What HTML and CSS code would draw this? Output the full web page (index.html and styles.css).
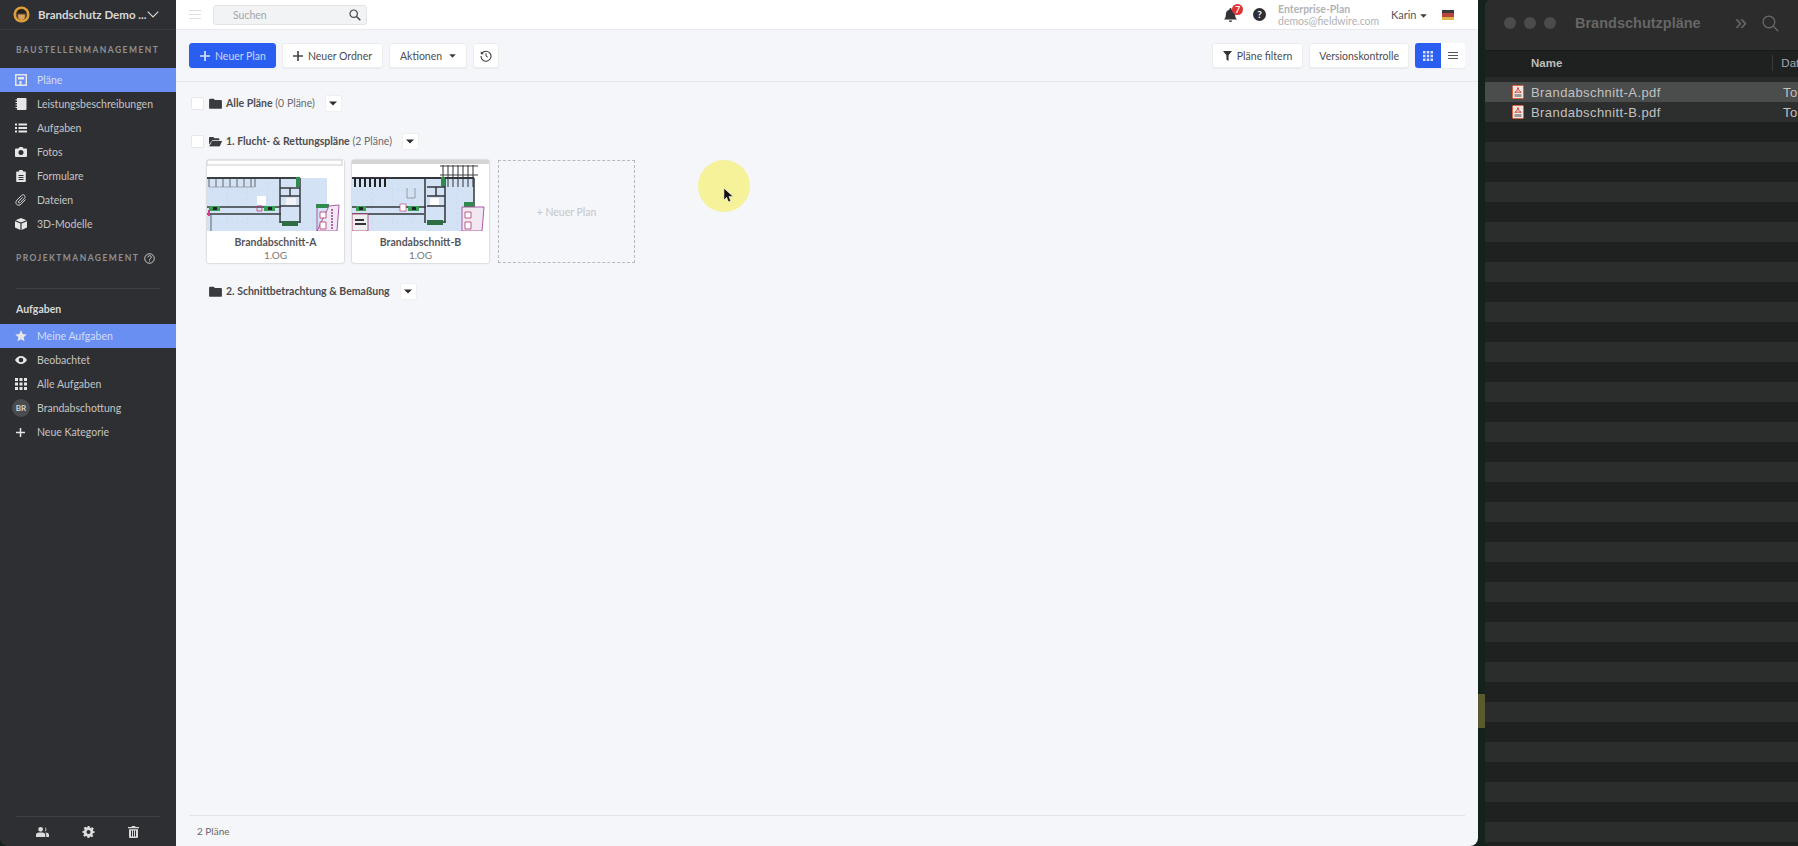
FILE: index.html
```html
<!DOCTYPE html>
<html lang="de">
<head>
    <meta charset="UTF-8">
    <meta name="viewport" content="width=device-width, initial-scale=1.0">
    <title>Pläne</title>
    <link rel="stylesheet" href="styles.css">
</head>
<body>
    <svg class="icon-defs" aria-hidden="true">
        <symbol id="i-folder" viewBox="0 0 14 12"><path d="M0 2a1.3 1.3 0 0 1 1.3-1.3h3.6L6.4 2.2h6.3A1.3 1.3 0 0 1 14 3.5v7a1.3 1.3 0 0 1-1.3 1.3H1.3A1.3 1.3 0 0 1 0 10.5z"/></symbol>
        <symbol id="i-folder-open" viewBox="0 0 15 12"><path d="M0 2a1.3 1.3 0 0 1 1.3-1.3h3.6l1.5 1.5h4.3a1.3 1.3 0 0 1 1.3 1.3v1H4L0 9.5z"/><path d="M3.6 5.3H14.5c.4 0 .6.4.4.7l-2.3 5.2a1 1 0 0 1-.9.6H.8c-.4 0-.6-.4-.4-.7z"/></symbol>
        <symbol id="i-caret" viewBox="0 0 10 6"><path d="M0 .5h10L5 5.500z"/></symbol>
        <symbol id="i-plus" viewBox="0 0 12 12"><path d="M5 0h2v5h5v2H7v5H5V7H0V5h5z"/></symbol>
        <symbol id="i-grid" viewBox="0 0 12 12"><path d="M0 0h3v3H0zM4.5 0h3v3h-3zM9 0h3v3H9zM0 4.5h3v3H0zM4.5 4.5h3v3h-3zM9 4.5h3v3H9zM0 9h3v3H0zM4.5 9h3v3h-3zM9 9h3v3H9z"/></symbol>
        <symbol id="i-pdf" viewBox="0 0 12 14"><rect x=".5" y=".5" width="11" height="13" rx="1" fill="#f2e6df" stroke="#d9633f"/><path d="M6 2.5c-.3 2-1.5 4-3.2 4.8 2-.4 4.500-.4 6.400 0C7.500 6.500 6.300 4.500 6 2.500z" fill="none" stroke="#c9302c" stroke-width=".9"/><rect x="2.5" y="9" width="7" height="3" fill="#9a9a9a"/></symbol>
    </svg>

    <div class="app">
        <aside class="sidebar">
            <div class="project">
                <svg class="project-logo" viewBox="0 0 18 18">
                    <circle cx="9" cy="9" r="8.5" fill="#e0a13a"/>
                    <circle cx="9" cy="9" r="6" fill="#5b4a33"/>
                    <path d="M4 8a5 4.5 0 0 1 10 0z" fill="#25231f"/>
                    <path d="M5.5 9h7v2.500a3.500 3.500 0 0 1-7 0z" fill="#d8a05c"/>
                </svg>
                <span class="project-name">Brandschutz Demo ...</span>
                <svg class="project-chevron" viewBox="0 0 12 7"><path d="M.7.7 6 6l5.300-5.300" fill="none" stroke="#d8d8d8" stroke-width="1.200"/></svg>
            </div>

            <div class="side-label">BAUSTELLENMANAGEMENT</div>
            <ul class="side-nav">
                <li class="side-item active">
                    <svg class="side-icon" viewBox="0 0 12 12"><path d="M0 0h12v12H0zM1.5 1.5v9h3V7h2v3.5h4V1.5zM3 3h6v2.5H3z" fill-rule="evenodd"/></svg>
                    Pläne
                </li>
                <li class="side-item">
                    <svg class="side-icon" viewBox="0 0 12 12"><path d="M2 0h8.500A1 1 0 0 1 11.500 1v10a1 1 0 0 1-1 1H2zM.5 1.500h2.500v1H.5zM.5 4h2.500v1H.5zM.5 6.500h2.500v1H.5zM.5 9h2.500v1H.5z"/></svg>
                    Leistungsbeschreibungen
                </li>
                <li class="side-item">
                    <svg class="side-icon" viewBox="0 0 12 12"><path d="M0 1.500h2v2H0zM3.500 1.500H12v2H3.500zM0 5h2v2H0zM3.500 5H12v2H3.500zM0 8.500h2v2H0zM3.500 8.500H12v2H3.500z"/></svg>
                    Aufgaben
                </li>
                <li class="side-item">
                    <svg class="side-icon" viewBox="0 0 12 12"><path d="M1 2.500h2.500L4.500 1h3l1 1.500H11a1 1 0 0 1 1 1V10a1 1 0 0 1-1 1H1a1 1 0 0 1-1-1V3.500a1 1 0 0 1 1-1zM6 4a2.500 2.500 0 1 0 0 5 2.500 2.500 0 0 0 0-5z" fill-rule="evenodd"/></svg>
                    Fotos
                </li>
                <li class="side-item">
                    <svg class="side-icon" viewBox="0 0 12 12"><path d="M2 1.500h2V1a1 1 0 0 1 1-1h2a1 1 0 0 1 1 1v.5h2a.8.8 0 0 1 .8.8v9a.8.8 0 0 1-.8.7H2a.8.8 0 0 1-.8-.7v-9a.8.8 0 0 1 .8-.8zM3.500 5v1h5V5zM3.500 7v1h5V7zM3.500 9v1h5V9z" fill-rule="evenodd"/></svg>
                    Formulare
                </li>
                <li class="side-item">
                    <svg class="side-icon" viewBox="0 0 12 12"><path d="M10.500 5.500 6 10.200c-1.300 1.300-3.200 1.300-4.300.2s-1.100-3 .2-4.300L6.500 1.500c.9-.9 2.200-.9 3-.1s.8 2.100-.1 3L5.200 8.600c-.5.500-1.200.5-1.600.1s-.4-1.100.1-1.600L7.600 3.300" fill="none" stroke="#d8d8d8" stroke-width="1"/></svg>
                    Dateien
                </li>
                <li class="side-item">
                    <svg class="side-icon" viewBox="0 0 12 12"><path d="M6 0l5.500 2.200L6 4.600.5 2.200zM0 3.200l5.400 2.400V12L0 9.500zM12 3.200 6.600 5.600V12L12 9.500z"/></svg>
                    3D-Modelle
                </li>
            </ul>

            <div class="side-label side-label-second">PROJEKTMANAGEMENT
                <svg class="side-help" viewBox="0 0 12 12"><circle cx="6" cy="6" r="5.200" fill="none" stroke="#d8d8d8" stroke-width="1"/><path d="M4.300 4.700a1.800 1.800 0 1 1 2.600 1.600c-.6.300-.9.600-.9 1.200" fill="none" stroke="#d8d8d8" stroke-width="1"/><path d="M5.500 8.300h1v1h-1z" fill="#d8d8d8"/></svg>
            </div>
            <div class="side-rule"></div>

            <div class="side-title">Aufgaben</div>
            <ul class="side-nav">
                <li class="side-item active">
                    <svg class="side-icon" viewBox="0 0 12 12"><path d="M6 .3l1.700 3.700 4 .5-3 2.700.8 4L6 9.200 2.500 11.200l.8-4-3-2.700 4-.5z"/></svg>
                    Meine Aufgaben
                </li>
                <li class="side-item">
                    <svg class="side-icon" viewBox="0 0 12 12"><path d="M6 2c2.700 0 4.800 1.700 6 4-1.200 2.300-3.300 4-6 4S1.200 8.300 0 6c1.200-2.300 3.300-4 6-4zm0 1.700a2.300 2.300 0 1 0 0 4.600 2.300 2.300 0 0 0 0-4.600z" fill-rule="evenodd"/></svg>
                    Beobachtet
                </li>
                <li class="side-item">
                    <svg class="side-icon" viewBox="0 0 12 12"><use href="#i-grid"/></svg>
                    Alle Aufgaben
                </li>
                <li class="side-item side-item-badge">
                    <span class="side-avatar">BR</span>
                    Brandabschottung
                </li>
                <li class="side-item">
                    <svg class="side-icon side-icon-small" viewBox="0 0 12 12"><path d="M5 0h2v5h5v2H7v5H5V7H0V5h5z"/></svg>
                    Neue Kategorie
                </li>
            </ul>

            <div class="side-foot">
                <svg class="foot-icon" viewBox="0 0 14 11"><path d="M5 0a2.600 2.600 0 1 1 0 5.200A2.600 2.600 0 0 1 5 0zM0 11V8.500C0 7 1.500 6 3 6h4c1.500 0 3 1 3 2.500V11z"/><path d="M9.500.5a2.400 2.400 0 0 1 0 4.600 3.500 3.500 0 0 0 0-4.600zM10 6c2 0 4 .8 4 2.500V11h-3V8.500c0-1-.4-1.800-1-2.500z"/></svg>
                <svg class="foot-icon" viewBox="0 0 12 12"><path d="M5 0h2l.3 1.600 1.200.5L9.900 1.200l1.400 1.400-.9 1.400.5 1.200L12 5v2l-1.600.3-.5 1.200.9 1.400-1.400 1.400-1.400-.9-1.200.5L7 12H5l-.3-1.600-1.200-.5-1.400.9L.7 9.400l.9-1.400-.5-1.200L0 7V5l1.600-.3.5-1.200-.9-1.400L2.600.7l1.400.9 1.200-.5zM6 4a2 2 0 1 0 0 4 2 2 0 0 0 0-4z" fill-rule="evenodd"/></svg>
                <svg class="foot-icon" viewBox="0 0 11 12"><path d="M4 0h3l.6 1H11v1.300H0V1h3.400zM1 3.200h9V11a1 1 0 0 1-1 1H2a1 1 0 0 1-1-1zM3 4.500V10.500h1V4.500zM5 4.500V10.500h1V4.500zM7 4.500V10.500h1V4.500z" fill-rule="evenodd"/></svg>
            </div>
        </aside>

        <main class="main">
            <header class="topbar">
                <div class="burger"><span></span><span></span><span></span></div>
                <div class="search">
                    <span>Suchen</span>
                    <svg class="search-icon" viewBox="0 0 12 12"><circle cx="4.700" cy="4.700" r="3.700" fill="none" stroke="#444" stroke-width="1.200"/><path d="M7.500 7.500 11.300 11.300" stroke="#444" stroke-width="1.500"/></svg>
                </div>
                <div class="topbar-right">
                    <div class="bell">
                        <svg class="bell-icon" viewBox="0 0 12 13"><path d="M6 0a1 1 0 0 1 1 1v.6c2 .4 3.300 2 3.300 4 0 3 .6 3.800 1.700 5H0c1.100-1.200 1.700-2 1.700-5 0-2 1.300-3.600 3.300-4V1a1 1 0 0 1 1-1zM4.500 11.500h3a1.500 1.500 0 0 1-3 0z"/></svg>
                        <span class="badge">7</span>
                    </div>
                    <span class="help">?</span>
                    <div class="plan-info">
                        <div class="plan-name">Enterprise-Plan</div>
                        <div>demos@fieldwire.com</div>
                    </div>
                    <span class="user">Karin <svg class="caret-small" viewBox="0 0 10 6"><use href="#i-caret"/></svg></span>
                    <div class="flag"></div>
                </div>
            </header>

            <div class="actions">
                <button class="btn btn-primary"><svg class="btn-plus" viewBox="0 0 12 12"><use href="#i-plus"/></svg>Neuer Plan</button>
                <button class="btn"><svg class="btn-plus" viewBox="0 0 12 12"><use href="#i-plus"/></svg>Neuer Ordner</button>
                <button class="btn">Aktionen <svg class="caret-small caret-btn" viewBox="0 0 10 6"><use href="#i-caret"/></svg></button>
                <button class="btn btn-square">
                    <svg class="btn-history" viewBox="0 0 12 12"><path d="M2 3.200A5 5 0 1 1 1 6" fill="none" stroke="#3c3d40" stroke-width="1.100"/><path d="M.8 1.200v3h3z" fill="#3c3d40"/><path d="M6 3.300V6l1.800 1.200" fill="none" stroke="#3c3d40" stroke-width="1"/></svg>
                </button>
                <div class="actions-right">
                    <button class="btn">
                        <svg class="btn-filter" viewBox="0 0 10 11"><path d="M0 0h10L6.200 4.800V11L3.800 9.300V4.800z"/></svg>Pläne filtern
                    </button>
                    <button class="btn btn-version">Versionskontrolle</button>
                    <div class="toggle">
                        <span class="toggle-on"><svg class="toggle-grid" viewBox="0 0 12 12"><use href="#i-grid"/></svg></span>
                        <span class="toggle-off"><i></i><i></i><i></i></span>
                    </div>
                </div>
            </div>

            <section class="content">
                <div class="folder-row">
                    <span class="check"></span>
                    <svg class="folder-icon" viewBox="0 0 14 12"><use href="#i-folder"/></svg>
                    <span class="folder-name"><b>Alle Pläne</b> (0 Pläne)</span>
                    <span class="drop"><svg viewBox="0 0 10 6"><use href="#i-caret"/></svg></span>
                </div>

                <div class="folder-row folder-row-next">
                    <span class="check"></span>
                    <svg class="folder-icon" viewBox="0 0 15 12"><use href="#i-folder-open"/></svg>
                    <span class="folder-name"><b>1. Flucht- &amp; Rettungspläne</b> (2 Pläne)</span>
                    <span class="drop"><svg viewBox="0 0 10 6"><use href="#i-caret"/></svg></span>
                </div>

                <div class="cards">
                    <div class="card">
                        <svg class="plan" viewBox="0 0 137 71">
                            <rect width="137" height="71" fill="#fff"/>
                            <rect x="0" y="0" width="135" height="5" fill="#fff" stroke="#bdbdbd" stroke-width=".8"/>
                            <rect x="0" y="18" width="120" height="53" fill="#d3e3f5"/>
                            <path d="M0 30h72M0 40h72M0 62h120M20 18v53M40 18v53M60 18v53M105 18v53" stroke="#b5c5d6" stroke-width=".5" stroke-dasharray="1 4"/>
                            <rect x="0" y="17" width="92" height="2" fill="#3d4043"/>
                            <path d="M2 19v8M9 19v8M16 19v8M23 19v8M30 19v8M37 19v8M44 19v8M48 19v8" stroke="#55585b" stroke-width=".9"/>
                            <path d="M2 27h46" stroke="#7c8084" stroke-width=".6"/>
                            <path d="M73 18v45M93 18v45M73 28h20M73 36h20M73 46h20M73 62h20M83 28v8" stroke="#383b3e" stroke-width="1.500" fill="none"/>
                            <rect x="79" y="38" width="10" height="7" fill="#f2f4f6"/>
                            <rect x="50" y="36" width="9" height="9" fill="#fff"/>
                            <path d="M0 47h74M0 54h74" stroke="#383b3e" stroke-width="1.300"/>
                            <path d="M4 54v17" stroke="#555" stroke-width=".9"/>
                            <rect x="89" y="17" width="4" height="10" fill="#2f8a4c"/>
                            <rect x="2" y="46" width="11" height="5" fill="#35a050"/>
                            <rect x="6" y="47" width="4" height="3" fill="#223"/>
                            <rect x="57" y="46" width="11" height="5" fill="#35a050"/>
                            <rect x="61" y="47" width="4" height="3" fill="#223"/>
                            <rect x="75" y="61" width="16" height="5" fill="#2e6e42"/>
                            <rect x="109" y="44" width="13" height="4" fill="#2f8a4c"/>
                            <rect x="1" y="50" width="2" height="6" fill="#d83a8a"/>
                            <path d="M50 46h5v5h-5z" fill="none" stroke="#c0357a" stroke-width=".8"/>
                            <path d="M110 48v23M122 46l10-1-2 26H110z" fill="#f2e8f4" stroke="#a04aa0" stroke-width=".9"/>
                            <path d="M113 52h6v6h-6zM113 62h6v7h-6z" fill="#fff" stroke="#b0356a" stroke-width=".8"/>
                            <path d="M125 49v20" stroke="#a86aa8" stroke-width="2" stroke-dasharray="2 1"/>
                        </svg>
                        <div class="card-name">Brandabschnitt-A</div>
                        <div class="card-sub">1.OG</div>
                    </div>
                    <div class="card">
                        <svg class="plan" viewBox="0 0 137 71">
                            <rect width="137" height="71" fill="#fff"/>
                            <rect x="0" y="0" width="137" height="4" fill="#d4d4d4"/>
                            <rect x="0" y="18" width="122" height="53" fill="#d3e3f5"/>
                            <path d="M0 30h72M0 40h72M0 62h120M20 18v53M40 18v53M60 18v53M105 18v53" stroke="#b5c5d6" stroke-width=".5" stroke-dasharray="1 4"/>
                            <path d="M91 5v22M96 5v22M101 5v22M106 5v22M111 5v22M116 5v22M121 5v22" stroke="#3f4245" stroke-width="1.100"/>
                            <path d="M88 6h38M88 15h38" stroke="#3f4245" stroke-width="1"/>
                            <rect x="0" y="17" width="122" height="2" fill="#33363a"/>
                            <path d="M3 18v9M8 18v9M13 18v9M18 18v9M23 18v9M28 18v9M33 18v9" stroke="#222" stroke-width="2"/>
                            <path d="M73 18v45M93 18v45M75 27h18M75 36h18M75 46h18M75 62h18M122 18v53M84 27v9" stroke="#33363a" stroke-width="1.500" fill="none"/>
                            <rect x="78" y="38" width="9" height="7" fill="#fff"/>
                            <path d="M55 28v10h8v-10" fill="none" stroke="#7c8084" stroke-width=".7"/>
                            <path d="M0 47h74M0 54h72" stroke="#33363a" stroke-width="1.500"/>
                            <rect x="0" y="54" width="16" height="17" fill="#eceef0" stroke="#b0356a" stroke-width=".8"/>
                            <path d="M3 60h9M3 64h11" stroke="#333" stroke-width="1.800"/>
                            <rect x="89" y="17" width="4" height="9" fill="#2f8a4c"/>
                            <rect x="4" y="46" width="10" height="5" fill="#35a050"/>
                            <rect x="7" y="47" width="4" height="3" fill="#223"/>
                            <rect x="56" y="46" width="11" height="5" fill="#35a050"/>
                            <rect x="60" y="47" width="4" height="3" fill="#223"/>
                            <rect x="75" y="60" width="16" height="5" fill="#2e6e42"/>
                            <rect x="112" y="42" width="10" height="5" fill="#2f8a4c"/>
                            <path d="M110 47h22l-2 24h-20z" fill="#f2e8f4" stroke="#a04aa0" stroke-width=".9"/>
                            <path d="M113 52h6v6h-6zM113 62h6v7h-6z" fill="#fff" stroke="#b0356a" stroke-width=".8"/>
                            <rect x="48" y="44" width="6" height="7" fill="#fff" stroke="#b0356a" stroke-width=".6"/>
                        </svg>
                        <div class="card-name">Brandabschnitt-B</div>
                        <div class="card-sub">1.OG</div>
                    </div>
                    <div class="card-new">+ Neuer Plan</div>
                </div>

                <div class="folder-row folder-row-last">
                    <span class="check-space"></span>
                    <svg class="folder-icon" viewBox="0 0 14 12"><use href="#i-folder"/></svg>
                    <span class="folder-name"><b>2. Schnittbetrachtung &amp; Bemaßung</b></span>
                    <span class="drop"><svg viewBox="0 0 10 6"><use href="#i-caret"/></svg></span>
                </div>

                <div class="click-spot"></div>
                <svg class="pointer" viewBox="0 0 11 16"><path d="M1 0v13l3-3 2 5 2.500-1-2-5H11z" fill="#111" stroke="#fff" stroke-width=".6"/></svg>
            </section>

            <footer class="statusbar"><span>2 Pläne</span></footer>
        </main>
    </div>

    <div class="desktop-strip"></div>

    <div class="finder">
        <div class="finder-title">
            <span class="light"></span><span class="light"></span><span class="light"></span>
            <span class="finder-name">Brandschutzpläne</span>
            <span class="finder-more">»</span>
            <svg class="finder-search" viewBox="0 0 16 16"><circle cx="6.500" cy="6.500" r="5.500" fill="none" stroke="#6a6a6a" stroke-width="1.200"/><path d="M10.500 10.500 15.300 15.300" stroke="#6a6a6a" stroke-width="1.200"/></svg>
        </div>
        <div class="finder-head">
            <span class="finder-col-name">Name</span>
            <svg class="finder-sort" viewBox="0 0 8 5"><path d="M.5 4.500 4 1l3.500 3.500" fill="none" stroke="#a0a0a0" stroke-width="1"/></svg>
            <span class="finder-col-date">Dat</span>
        </div>
        <div class="finder-row selected">
            <svg class="pdf-icon" viewBox="0 0 12 14"><use href="#i-pdf"/></svg>
            <span>Brandabschnitt-A.pdf</span>
            <span class="finder-date">To</span>
        </div>
        <div class="finder-row">
            <svg class="pdf-icon" viewBox="0 0 12 14"><use href="#i-pdf"/></svg>
            <span>Brandabschnitt-B.pdf</span>
            <span class="finder-date">To</span>
        </div>
        <div class="finder-stripes"></div>
    </div>
</body>
</html>
```

FILE: styles.css
```css
* {
    box-sizing: border-box;
}
body {
    margin: 0;
    height: 100vh;
    display: flex;
    overflow: hidden;
    background-color: #13231c;
    font-family: Lato, Arial, sans-serif;
    font-size: 10.5px;
    color: #4c4d50;
}
ul {
    list-style: none;
    margin: 0;
    padding: 0;
}
.icon-defs {
    display: none;
}

.app {
    width: 1478px;
    display: flex;
    border-radius: 0 0 8px 8px;
    overflow: hidden;
}

/* sidebar */
.sidebar {
    width: 176px;
    display: flex;
    flex-direction: column;
    background-color: #2e2f32;
    color: #c9c9ca;
}
.project {
    height: 30px;
    display: flex;
    align-items: center;
    padding-left: 13px;
    border-bottom: 1px solid #3a3b3e;
}
.project-logo {
    width: 17px;
    height: 17px;
    margin-right: 8px;
}
.project-name {
    width: 109px;
    font-weight: 700;
    font-size: 11.5px;
    color: #d8d8d8;
    white-space: nowrap;
}
.project-chevron {
    width: 12px;
    height: 7px;
}
.side-label {
    height: 14px;
    margin: 13px 0 11px 16px;
    display: flex;
    align-items: center;
    font-size: 8.5px;
    font-weight: 700;
    letter-spacing: 1.45px;
    color: #8f9092;
}
.side-label-second {
    margin: 15px 0 0 16px;
}
.side-help {
    width: 11px;
    height: 11px;
    margin-left: 5px;
}
.side-rule {
    height: 1px;
    margin: 23px 16px 0;
    background-color: #3f4043;
}
.side-title {
    height: 16px;
    margin: 12px 0 7px 16px;
    font-weight: 700;
    line-height: 16px;
    color: #d8d8d8;
}
.side-item {
    height: 24px;
    display: flex;
    align-items: center;
    padding-left: 15px;
    color: #c4c4c5;
    white-space: nowrap;
}
.side-item.active {
    background-color: #6a8ff2;
    color: #d3ddf8;
}
.side-icon {
    width: 12px;
    height: 12px;
    margin-right: 10px;
    fill: #e6e6e6;
}
.side-icon-small {
    width: 9px;
    height: 9px;
    margin: 0 12px 0 1px;
}
.side-item-badge {
    padding-left: 12px;
}
.side-avatar {
    width: 18px;
    height: 18px;
    margin-right: 7px;
    border-radius: 50%;
    background-color: #4a4b4e;
    color: #d8d8d8;
    font-size: 8px;
    font-weight: 700;
    line-height: 18px;
    text-align: center;
}
.side-foot {
    height: 30px;
    margin: auto 16px 0;
    display: flex;
    justify-content: space-between;
    align-items: center;
    padding: 0 20px;
    border-top: 1px solid #3f4043;
}
.foot-icon {
    width: 13px;
    height: 12px;
    fill: #dcdcdc;
}

/* main column */
.main {
    flex: 1;
    display: flex;
    flex-direction: column;
    background-color: #f5f6f9;
}
.topbar {
    height: 30px;
    display: flex;
    align-items: center;
    padding: 0 24px 0 13px;
    background-color: #fff;
    border-bottom: 1px solid #e8e9ec;
}
.burger {
    width: 12px;
    margin-right: 12px;
}
.burger span {
    display: block;
    height: 1px;
    margin: 3px 0;
    background-color: #dfe0e3;
}
.search {
    width: 154px;
    height: 20px;
    display: flex;
    align-items: center;
    justify-content: space-between;
    padding: 0 5px 0 19px;
    background-color: #f2f3f5;
    border: 1px solid #e3e4e7;
    border-radius: 3px;
    color: #a4a5a8;
}
.search-icon {
    width: 12px;
    height: 12px;
}
.topbar-right {
    margin-left: auto;
    display: flex;
    align-items: center;
}
.bell {
    position: relative;
    width: 13px;
    height: 14px;
    margin-right: 16px;
}
.bell-icon {
    width: 13px;
    height: 14px;
    fill: #333437;
}
.badge {
    position: absolute;
    top: -4px;
    left: 8px;
    width: 11px;
    height: 11px;
    border-radius: 50%;
    background-color: #e0322f;
    color: #fff;
    font-size: 9px;
    font-weight: 700;
    line-height: 11px;
    text-align: center;
}
.help {
    width: 13px;
    height: 13px;
    margin-right: 12px;
    border-radius: 50%;
    background-color: #2e2f32;
    color: #fff;
    font-size: 10px;
    font-weight: 700;
    line-height: 13px;
    text-align: center;
}
.plan-info {
    width: 113px;
    font-size: 10.5px;
    line-height: 12px;
    color: #b2b3b6;
}
.plan-name {
    font-weight: 700;
}
.user {
    width: 51px;
    font-size: 11px;
    color: #55565a;
}
.caret-small {
    width: 7px;
    height: 4px;
    margin-left: 1px;
    vertical-align: middle;
    fill: #3c3d40;
}
.caret-btn {
    margin-left: 7px;
}
.flag {
    width: 12px;
    height: 10px;
    background: linear-gradient(#3a3a3a 33%, #b8453a 33%, #b8453a 66%, #dcb44e 66%);
}

/* action bar */
.actions {
    height: 52px;
    display: flex;
    align-items: center;
    gap: 6px;
    padding: 0 13px;
    border-bottom: 1px solid #e5e6ea;
}
.actions-right {
    margin-left: auto;
    display: flex;
    gap: 6px;
}
.btn {
    height: 25px;
    display: flex;
    align-items: center;
    padding: 0 10px;
    background-color: #fff;
    border: 1px solid #eceded;
    border-radius: 3px;
    color: #4c4d50;
    font-family: inherit;
    font-size: 10.5px;
    box-shadow: 0 1px 1px rgba(0, 0, 0, 0.05);
    white-space: nowrap;
}
.btn-primary {
    padding-right: 9px;
    background-color: #2a5ef0;
    border-color: #2a5ef0;
    color: #c9d6fb;
}
.btn-primary .btn-plus {
    fill: #d7e1fc;
}
.btn-version {
    padding: 0 9px;
}
.btn-plus {
    width: 10px;
    height: 10px;
    margin-right: 5px;
    fill: #444548;
}
.btn-square {
    width: 26px;
    padding: 0 6px;
}
.btn-history {
    width: 12px;
    height: 12px;
}
.btn-filter {
    width: 9px;
    height: 10px;
    margin-right: 5px;
    fill: #333437;
}
.toggle {
    width: 50px;
    height: 25px;
    display: flex;
    background-color: #fff;
    border-radius: 3px;
    box-shadow: 0 1px 1px rgba(0, 0, 0, 0.05);
}
.toggle-on {
    width: 26px;
    display: flex;
    align-items: center;
    justify-content: center;
    background-color: #2a5ef0;
    border-radius: 3px 0 0 3px;
}
.toggle-grid {
    width: 10px;
    height: 10px;
    fill: #d7e1fc;
}
.toggle-off {
    flex: 1;
    display: flex;
    flex-direction: column;
    justify-content: center;
    gap: 2px;
    padding: 0 7px;
}
.toggle-off i {
    height: 1px;
    background-color: #55565a;
}

/* plan list */
.content {
    position: relative;
    flex: 1;
    padding: 12px 15px 0;
}
.folder-row {
    height: 18px;
    display: flex;
    align-items: center;
    color: #6a6b6e;
}
.folder-row-next {
    margin-top: 20px;
}
.folder-row-last {
    margin-top: 19px;
}
.folder-row b {
    color: #4c4d50;
}
.check {
    width: 13px;
    height: 13px;
    margin-right: 5px;
    background-color: #fff;
    border: 1px solid #e6e7ea;
    border-radius: 2px;
}
.check-space {
    width: 18px;
}
.folder-icon {
    width: 13px;
    height: 11px;
    margin-right: 4px;
    fill: #3a3b3e;
}
.folder-name {
    margin-right: 10px;
}
.drop {
    width: 17px;
    height: 17px;
    display: flex;
    align-items: center;
    justify-content: center;
    background-color: #fff;
    border: 1px solid #eeeff1;
    border-radius: 2px;
}
.drop svg {
    width: 8px;
    height: 5px;
    fill: #2e2f32;
}
.cards {
    display: flex;
    gap: 8px;
    margin: 10px 0 0 16px;
}
.card {
    width: 137px;
    height: 103px;
    background-color: #fff;
    border-radius: 2px;
    box-shadow: 0 0 2px rgba(0, 0, 0, 0.35);
    text-align: center;
}
.plan {
    display: block;
    width: 137px;
    height: 71px;
}
.card-name {
    margin-top: 4px;
    font-weight: 700;
    line-height: 14px;
    color: #55565a;
}
.card-sub {
    font-size: 10px;
    line-height: 12px;
    color: #77787b;
}
.card-new {
    width: 137px;
    height: 103px;
    margin-left: 1px;
    display: flex;
    align-items: center;
    justify-content: center;
    border: 1px dashed #b9babe;
    color: #c5c6c9;
}
.click-spot {
    position: absolute;
    left: 522px;
    top: 78px;
    width: 52px;
    height: 52px;
    border-radius: 50%;
    background-color: #f5f29a;
}
.pointer {
    position: absolute;
    left: 547px;
    top: 106px;
    width: 10px;
    height: 15px;
}
.statusbar {
    height: 31px;
    margin: 0 13px;
    padding: 0 8px;
    display: flex;
    align-items: center;
    border-top: 1px solid #e2e3e6;
    font-size: 10px;
    color: #66676a;
}

/* desktop behind the browser */
.desktop-strip {
    width: 7px;
    background: linear-gradient(#13231c 82%, #5a5a30 82%, #5a5a30 86%, #13231c 86%);
}

/* finder window */
.finder {
    flex: 1;
    display: flex;
    flex-direction: column;
    background-color: #2b2c2c;
    border-radius: 6px 0 0 6px;
    color: #c2c2c2;
    font-family: "Liberation Sans", Arial, sans-serif;
    overflow: hidden;
}
.finder-title {
    height: 50px;
    flex: none;
    display: flex;
    align-items: center;
    padding: 0 0 4px 19px;
    background-color: #2c2c2d;
}
.light {
    width: 12px;
    height: 12px;
    margin-right: 8px;
    border-radius: 50%;
    background-color: #4b4b4b;
}
.finder-name {
    margin-left: 11px;
    font-size: 14.5px;
    font-weight: 700;
    color: #666;
}
.finder-more {
    margin-left: 34px;
    font-size: 22px;
    line-height: 22px;
    color: #666;
}
.finder-search {
    width: 17px;
    height: 17px;
    margin-left: 15px;
}
.finder-head {
    height: 32px;
    flex: none;
    display: flex;
    align-items: center;
    padding: 0 0 8px 46px;
    background-color: #1f2020;
    border-top: 1px solid #1a1a1a;
    box-shadow: inset 0 -5px 0 #282929;
    font-size: 11.5px;
}
.finder-col-name {
    font-weight: 700;
    color: #bdbdbd;
}
.finder-sort {
    width: 8px;
    height: 5px;
    margin-left: 198px;
}
.finder-col-date {
    margin-left: 12px;
    padding-left: 8px;
    border-left: 1px solid #3a3a3a;
    line-height: 16px;
    color: #a8a8a8;
}
.finder-row {
    height: 20px;
    flex: none;
    display: flex;
    align-items: center;
    padding-left: 27px;
    background-color: #2d2e2e;
    font-size: 13px;
    letter-spacing: .42px;
}
.finder-row.selected {
    background-color: #4b4c4c;
}
.pdf-icon {
    width: 12px;
    height: 14px;
    margin-right: 7px;
}
.finder-date {
    position: absolute;
    left: 1783px;
}
.finder-stripes {
    flex: 1;
    background: repeating-linear-gradient(#1f2020 0, #1f2020 20px, #2b2c2c 20px, #2b2c2c 40px);
}
```
